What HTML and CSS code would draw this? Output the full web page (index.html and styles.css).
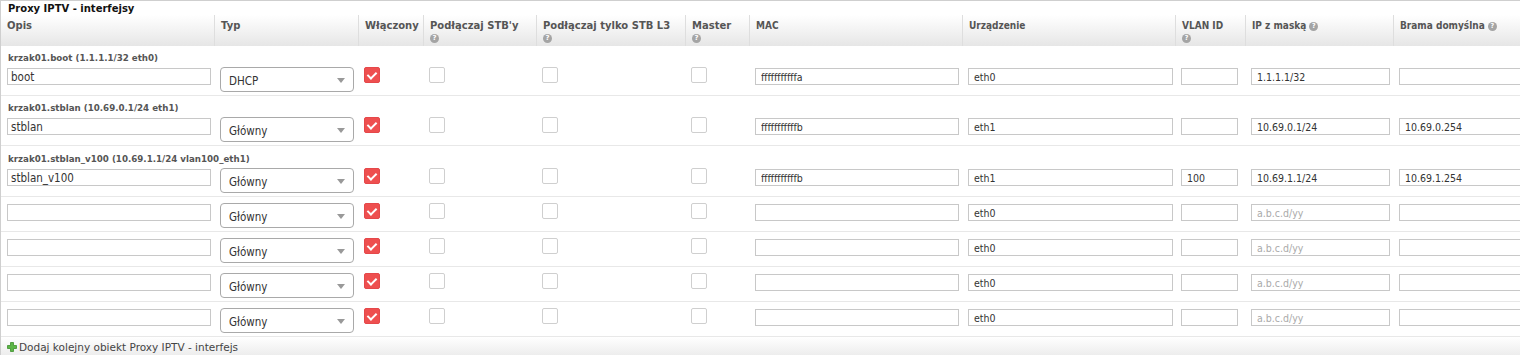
FILE: index.html
```html
<!DOCTYPE html>
<html lang="pl">
<head>
<meta charset="utf-8">
<title>Proxy IPTV - interfejsy</title>
<link rel="stylesheet" href="styles.css">
</head>
<body>
<div class="panel">
  <div class="title">Proxy IPTV - interfejsy</div>
  <div class="row head">
    <div class="hc">Opis</div>
    <div class="hc">Typ</div>
    <div class="hc">Włączony</div>
    <div class="hc">Podłączaj STB'y<span class="help"></span></div>
    <div class="hc">Podłączaj tylko STB L3<span class="help"></span></div>
    <div class="hc">Master<span class="help"></span></div>
    <div class="hc r">MAC</div>
    <div class="hc r">Urządzenie</div>
    <div class="hc r">VLAN ID<span class="help"></span></div>
    <div class="hc r inl">IP z maską <span class="help"></span></div>
    <div class="hc r inl">Brama domyślna <span class="help"></span></div>
  </div>

  <div class="row">
    <div class="c first"><div class="lbl">krzak01.boot (1.1.1.1/32 eth0)</div><div class="ctl"><input class="inp w-opis" value="boot"></div></div>
    <div class="c"><div class="ctl"><div class="sel"><span>DHCP</span><i class="arr"></i></div></div></div>
    <div class="c"><div class="ctl"><span class="cb on"></span></div></div>
    <div class="c"><div class="ctl"><span class="cb"></span></div></div>
    <div class="c"><div class="ctl"><span class="cb"></span></div></div>
    <div class="c"><div class="ctl"><span class="cb"></span></div></div>
    <div class="c"><div class="ctl"><input class="inp r w-mac" value="fffffffffffa"></div></div>
    <div class="c"><div class="ctl"><input class="inp r w-dev" value="eth0"></div></div>
    <div class="c"><div class="ctl"><input class="inp r w-vlan" value=""></div></div>
    <div class="c"><div class="ctl"><input class="inp r w-ip" value="1.1.1.1/32"></div></div>
    <div class="c"><div class="ctl"><input class="inp r w-gw" value=""></div></div>
  </div>

  <div class="row">
    <div class="c first"><div class="lbl">krzak01.stblan (10.69.0.1/24 eth1)</div><div class="ctl"><input class="inp w-opis" value="stblan"></div></div>
    <div class="c"><div class="ctl"><div class="sel"><span>Główny</span><i class="arr"></i></div></div></div>
    <div class="c"><div class="ctl"><span class="cb on"></span></div></div>
    <div class="c"><div class="ctl"><span class="cb"></span></div></div>
    <div class="c"><div class="ctl"><span class="cb"></span></div></div>
    <div class="c"><div class="ctl"><span class="cb"></span></div></div>
    <div class="c"><div class="ctl"><input class="inp r w-mac" value="fffffffffffb"></div></div>
    <div class="c"><div class="ctl"><input class="inp r w-dev" value="eth1"></div></div>
    <div class="c"><div class="ctl"><input class="inp r w-vlan" value=""></div></div>
    <div class="c"><div class="ctl"><input class="inp r w-ip" value="10.69.0.1/24"></div></div>
    <div class="c"><div class="ctl"><input class="inp r w-gw" value="10.69.0.254"></div></div>
  </div>

  <div class="row tall">
    <div class="c first"><div class="lbl">krzak01.stblan_v100 (10.69.1.1/24 vlan100_eth1)</div><div class="ctl"><input class="inp w-opis" value="stblan_v100"></div></div>
    <div class="c"><div class="ctl"><div class="sel"><span>Główny</span><i class="arr"></i></div></div></div>
    <div class="c"><div class="ctl"><span class="cb on"></span></div></div>
    <div class="c"><div class="ctl"><span class="cb"></span></div></div>
    <div class="c"><div class="ctl"><span class="cb"></span></div></div>
    <div class="c"><div class="ctl"><span class="cb"></span></div></div>
    <div class="c"><div class="ctl"><input class="inp r w-mac" value="fffffffffffb"></div></div>
    <div class="c"><div class="ctl"><input class="inp r w-dev" value="eth1"></div></div>
    <div class="c"><div class="ctl"><input class="inp r w-vlan" value="100"></div></div>
    <div class="c"><div class="ctl"><input class="inp r w-ip" value="10.69.1.1/24"></div></div>
    <div class="c"><div class="ctl"><input class="inp r w-gw" value="10.69.1.254"></div></div>
  </div>

  <div class="row">
    <div class="c first"><div class="ctl"><input class="inp w-opis" value=""></div></div>
    <div class="c"><div class="ctl"><div class="sel"><span>Główny</span><i class="arr"></i></div></div></div>
    <div class="c"><div class="ctl"><span class="cb on"></span></div></div>
    <div class="c"><div class="ctl"><span class="cb"></span></div></div>
    <div class="c"><div class="ctl"><span class="cb"></span></div></div>
    <div class="c"><div class="ctl"><span class="cb"></span></div></div>
    <div class="c"><div class="ctl"><input class="inp r w-mac" value=""></div></div>
    <div class="c"><div class="ctl"><input class="inp r w-dev" value="eth0"></div></div>
    <div class="c"><div class="ctl"><input class="inp r w-vlan" value=""></div></div>
    <div class="c"><div class="ctl"><input class="inp r w-ip" value="" placeholder="a.b.c.d/yy"></div></div>
    <div class="c"><div class="ctl"><input class="inp r w-gw" value=""></div></div>
  </div>

  <div class="row">
    <div class="c first"><div class="ctl"><input class="inp w-opis" value=""></div></div>
    <div class="c"><div class="ctl"><div class="sel"><span>Główny</span><i class="arr"></i></div></div></div>
    <div class="c"><div class="ctl"><span class="cb on"></span></div></div>
    <div class="c"><div class="ctl"><span class="cb"></span></div></div>
    <div class="c"><div class="ctl"><span class="cb"></span></div></div>
    <div class="c"><div class="ctl"><span class="cb"></span></div></div>
    <div class="c"><div class="ctl"><input class="inp r w-mac" value=""></div></div>
    <div class="c"><div class="ctl"><input class="inp r w-dev" value="eth0"></div></div>
    <div class="c"><div class="ctl"><input class="inp r w-vlan" value=""></div></div>
    <div class="c"><div class="ctl"><input class="inp r w-ip" value="" placeholder="a.b.c.d/yy"></div></div>
    <div class="c"><div class="ctl"><input class="inp r w-gw" value=""></div></div>
  </div>

  <div class="row">
    <div class="c first"><div class="ctl"><input class="inp w-opis" value=""></div></div>
    <div class="c"><div class="ctl"><div class="sel"><span>Główny</span><i class="arr"></i></div></div></div>
    <div class="c"><div class="ctl"><span class="cb on"></span></div></div>
    <div class="c"><div class="ctl"><span class="cb"></span></div></div>
    <div class="c"><div class="ctl"><span class="cb"></span></div></div>
    <div class="c"><div class="ctl"><span class="cb"></span></div></div>
    <div class="c"><div class="ctl"><input class="inp r w-mac" value=""></div></div>
    <div class="c"><div class="ctl"><input class="inp r w-dev" value="eth0"></div></div>
    <div class="c"><div class="ctl"><input class="inp r w-vlan" value=""></div></div>
    <div class="c"><div class="ctl"><input class="inp r w-ip" value="" placeholder="a.b.c.d/yy"></div></div>
    <div class="c"><div class="ctl"><input class="inp r w-gw" value=""></div></div>
  </div>

  <div class="row">
    <div class="c first"><div class="ctl"><input class="inp w-opis" value=""></div></div>
    <div class="c"><div class="ctl"><div class="sel"><span>Główny</span><i class="arr"></i></div></div></div>
    <div class="c"><div class="ctl"><span class="cb on"></span></div></div>
    <div class="c"><div class="ctl"><span class="cb"></span></div></div>
    <div class="c"><div class="ctl"><span class="cb"></span></div></div>
    <div class="c"><div class="ctl"><span class="cb"></span></div></div>
    <div class="c"><div class="ctl"><input class="inp r w-mac" value=""></div></div>
    <div class="c"><div class="ctl"><input class="inp r w-dev" value="eth0"></div></div>
    <div class="c"><div class="ctl"><input class="inp r w-vlan" value=""></div></div>
    <div class="c"><div class="ctl"><input class="inp r w-ip" value="" placeholder="a.b.c.d/yy"></div></div>
    <div class="c"><div class="ctl"><input class="inp r w-gw" value=""></div></div>
  </div>

  <div class="foot">
    <svg class="plus" width="10" height="10" viewBox="0 0 10 10"><path d="M3.5 0.5h3v3h3v3h-3v3h-3v-3h-3v-3h3z" fill="#5cb646" stroke="#3d8f2c" stroke-width="0.8"/></svg>
    <span>Dodaj kolejny obiekt Proxy IPTV - interfejs</span>
  </div>
</div>
</body>
</html>
```
FILE: styles.css
```css
* { box-sizing: border-box; }
html, body { margin: 0; padding: 0; background: #fff; overflow: hidden; }
body { width: 1520px; height: 355px; }

.panel {
  width: 1720px;
  border-top: 1px solid #cfcfcf;
  border-left: 1px solid #cfcfcf;
  font-family: "DejaVu Sans", Verdana, sans-serif;
  color: #333;
}

.title {
  height: 14px;
  padding: 3px 0 0 7px;
  font-size: 10px;
  font-weight: bold;
  color: #111;
  line-height: 10px;
}

.row {
  display: grid;
  grid-template-columns: 213px 144px 65px 113px 149px 64px 213px 213px 70px 148px 200px;
  border-bottom: 1px solid #e8e8e8;
}

.row.head {
  height: 31px;
  border-bottom: none;
  background: linear-gradient(#ffffff, #e6e6e6);
}

.hc {
  padding: 5px 0 0 6px;
  font-size: 10px;
  font-weight: bold;
  color: #555;
  line-height: 12px;
  border-left: 1px solid #dedede;
  display: flex;
  flex-direction: column;
  align-items: flex-start;
}
.hc:first-child { border-left: none; }
.hc.inl { flex-direction: row; align-items: flex-start; }
.hc.r {
  font-family: "DejaVu Sans Condensed", "DejaVu Sans", sans-serif;
  font-stretch: condensed;
}

.help {
  display: inline-block;
  width: 9px;
  height: 9px;
  margin-top: 2px;
  border-radius: 50%;
  background: #a4a4a4;
  position: relative;
}
.hc.inl .help { margin: 2px 0 0 3px; }
.help::after {
  content: "?";
  position: absolute;
  left: 0;
  top: 0;
  width: 9px;
  text-align: center;
  font-size: 7px;
  line-height: 9px;
  color: #fff;
  font-weight: bold;
  font-family: "DejaVu Sans", sans-serif;
}

.c {
  padding: 6px 0 3px 6px;
  display: flex;
  flex-direction: column;
  justify-content: flex-end;
}
.row.tall .c { padding-top: 7px; }
.lbl {
  height: 15px;
  font-size: 8.7px;
  font-weight: bold;
  color: #555;
  white-space: nowrap;
  line-height: 12px;
  padding-left: 1px;
}
.ctl { height: 25px; display: flex; align-items: flex-start; }

.inp {
  margin: 1px 0 0 0;
  height: 17px;
  border: 1px solid #c8c8c8;
  border-radius: 0;
  padding: 0 0 0 3px;
  font-family: "DejaVu Sans Condensed", "DejaVu Sans", sans-serif;
  font-stretch: condensed;
  font-size: 11.5px;
  color: #333;
  background: #fff;
  outline: none;
}
.inp.r {
  font-size: 10.5px;
  padding-left: 5px;
}
.inp::placeholder { color: #aaa; }
.w-opis { width: 204px; }
.w-mac { width: 204px; }
.w-dev { width: 205px; }
.w-vlan { width: 57px; }
.w-ip { width: 139px; }
.w-gw { width: 190px; }

.sel {
  width: 134px;
  height: 25px;
  border: 1px solid #a9a9a9;
  border-radius: 4px;
  display: flex;
  align-items: center;
  justify-content: space-between;
  padding: 2px 8px 0 8px;
  font-family: "DejaVu Sans Condensed", "DejaVu Sans", sans-serif;
  font-stretch: condensed;
  font-size: 11.5px;
  color: #333;
}
.arr {
  width: 0;
  height: 0;
  border-left: 4px solid transparent;
  border-right: 4px solid transparent;
  border-top: 5px solid #999;
}

.cb {
  width: 16px;
  height: 16px;
  border: 1px solid #cfcfcf;
  border-radius: 2px;
  background: #fff;
  position: relative;
}
.cb.on {
  border-color: #e5484a;
  background: #ee4f4f;
}
.cb.on::after {
  content: "";
  position: absolute;
  left: 4px;
  top: 2px;
  width: 4px;
  height: 7px;
  border-right: 2px solid #fff;
  border-bottom: 2px solid #fff;
  transform: rotate(45deg);
}

.foot {
  height: 19px;
  display: flex;
  align-items: center;
  gap: 2px;
  padding: 1px 0 0 6px;
  background: linear-gradient(#ffffff, #ececec);
  font-size: 10.5px;
  color: #444;
}
.plus { flex: none; }
```
